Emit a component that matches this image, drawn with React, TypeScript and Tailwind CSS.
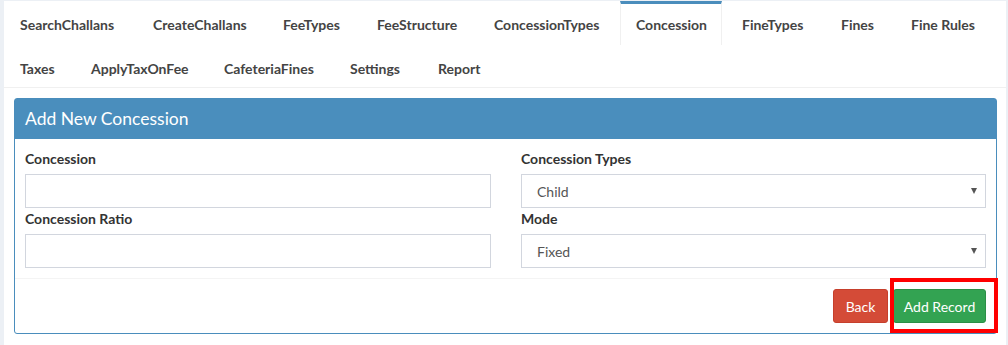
import React from 'react';

const tabsRow1 = [
  { label: 'SearchChallans', w: 'w-[128px]' },
  { label: 'CreateChallans', w: 'w-[125px]' },
  { label: 'FeeTypes', w: 'w-[89px]' },
  { label: 'FeeStructure', w: 'w-[112px]' },
  { label: 'ConcessionTypes', w: 'w-[136px]' },
  { label: 'Concession', w: 'w-[102px]', active: true },
  { label: 'FineTypes', w: 'w-[94px]' },
  { label: 'Fines', w: 'w-[65px]' },
  { label: 'Fine Rules', w: 'w-[93px]' },
];

const tabsRow2 = [
  { label: 'Taxes', w: 'w-[66px]' },
  { label: 'ApplyTaxOnFee', w: 'w-[128px]' },
  { label: 'CafeteriaFines', w: 'w-[121px]' },
  { label: 'Settings', w: 'w-[83px]' },
  { label: 'Report', w: 'w-[72px]' },
];

type Tab = { label: string; w: string; active?: boolean };

const TabItem = ({ tab }: { tab: Tab }) => (
  <div
    className={`${tab.w} h-[44px] mr-[5px] flex items-center px-[15px] border-t-[3px] whitespace-nowrap text-[14px] font-bold text-[#444] ${
      tab.active ? 'border-t-[#4a8dbc] border-x border-x-[#f0f0f0]' : 'border-t-transparent'
    }`}
  >
    {tab.label}
  </div>
);

const Caret = () => (
  <svg width="6" height="6" viewBox="0 0 6 6" className="absolute right-[8px] top-1/2 -translate-y-1/2">
    <path d="M0 0h6L3 6z" fill="#555" />
  </svg>
);

const App = () => {
  return (
    <div className="w-[1008px] h-[345px] bg-[#ecf0f5] pl-[4px] pr-[2px] pt-[1px] overflow-hidden" style={{ fontFamily: 'Lato, "Liberation Sans", sans-serif' }}>
      <div className="bg-white h-full">
        {/* tabs */}
        <div className="border-b border-[#f0f0f0] pl-[1px]">
          <div className="flex">
            {tabsRow1.map((t) => (
              <TabItem key={t.label} tab={t} />
            ))}
          </div>
          <div className="flex h-[42px] items-start overflow-hidden">
            {tabsRow2.map((t) => (
              <TabItem key={t.label} tab={t} />
            ))}
          </div>
        </div>

        {/* panel */}
        <div className="pl-[10px] pt-[10px] w-[993px]">
          <div className="relative border border-[#4a8dbc] rounded-[3px] bg-white">
            <div className="bg-[#4a8ebd] h-[40px] flex items-center px-[10px] text-white text-[17.5px]">
              Add New Concession
            </div>
            <div className="px-[10px] pt-[10px] pb-[10px] grid grid-cols-[466px_465px] gap-x-[30px]">
              <div>
                <label className="block h-[20px] leading-[20px] text-[14px] font-bold text-[#333]">Concession</label>
                <input className="mt-[5px] w-full h-[34px] border border-[#d2d6de] outline-none px-3" />
                <label className="block h-[20px] leading-[20px] mt-[1px] text-[14px] font-bold text-[#333]">Concession Ratio</label>
                <input className="mt-[5px] w-full h-[34px] border border-[#d2d6de] outline-none px-3" />
              </div>
              <div>
                <label className="block h-[20px] leading-[20px] text-[14px] font-bold text-[#333]">Concession Types</label>
                <div className="relative mt-[5px] h-[34px] border border-[#d2d6de] flex items-center pl-[15px] text-[14px] text-[#555]">
                  Child
                  <Caret />
                </div>
                <label className="block h-[20px] leading-[20px] mt-[1px] text-[14px] font-bold text-[#333]">Mode</label>
                <div className="relative mt-[5px] h-[34px] border border-[#d2d6de] flex items-center pl-[15px] text-[14px] text-[#555]">
                  Fixed
                  <Caret />
                </div>
              </div>
            </div>
            <div className="border-t border-[#f4f4f4] px-[10px] py-[10px] flex justify-end gap-[5px]">
              <button className="h-[34px] w-[55px] rounded-[3px] bg-[#d44b37] border border-[#c63f2c] text-white text-[14px]">
                Back
              </button>
              <button className="h-[34px] w-[93px] rounded-[3px] bg-[#33a352] border border-[#2b8f46] text-white text-[14px]">
                Add Record
              </button>
            </div>
            <div className="absolute left-[875px] top-[179px] w-[108px] h-[55px] border-[4px] border-[#ff0000] pointer-events-none" />
          </div>
        </div>
      </div>
    </div>
  );
};

export default App;
